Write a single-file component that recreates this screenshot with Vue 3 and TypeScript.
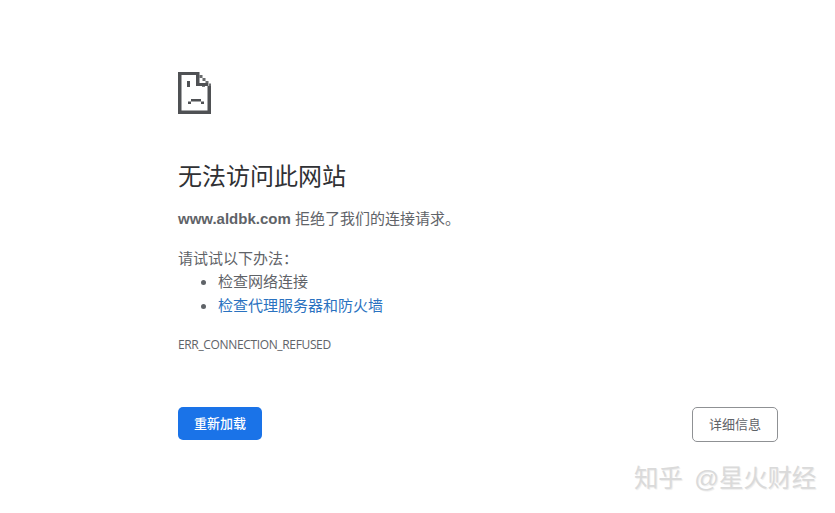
<script setup lang="ts">
const tips: { text: string; link: boolean }[] = [
  { text: '检查网络连接', link: false },
  { text: '检查代理服务器和防火墙', link: true },
]
</script>

<template>
  <div class="page">
    <main class="panel">
      <svg class="icon" width="33" height="42" viewBox="0 0 33 42" fill="#4f5154">
        <path d="M0 0H21.5V3H3.5V38.5H29.5V14H33V42H0Z" />
        <path d="M18 3H21.5V11H30V14H18Z" />
        <path d="M21.5 3H24.5V6H21.5ZM24.5 6H27.5V9H24.5ZM27.5 9H30.5V11.5H27.5ZM30.5 11.5H33V14H30.5Z" opacity=".85" />
        <path d="M9 9H12V15H9Z" />
        <path d="M24 11H27V15H24Z" opacity=".75" />
        <path d="M13 27H23V29.5H13ZM10 29.5H13V32H10ZM23 29.5H26V32H23Z" />
      </svg>
      <h1 class="title">无法访问此网站</h1>
      <p class="summary"><strong>www.aldbk.com</strong> 拒绝了我们的连接请求。</p>
      <p class="try">请试试以下办法：</p>
      <ul class="tips">
        <li v-for="tip in tips" :key="tip.text" class="tip">
          <span class="bullet"></span>
          <a v-if="tip.link" class="link" href="#">{{ tip.text }}</a>
          <span v-else>{{ tip.text }}</span>
        </li>
      </ul>
      <div class="code">ERR_CONNECTION_REFUSED</div>
      <div class="actions">
        <button class="btn primary" type="button">重新加载</button>
        <button class="btn secondary" type="button">详细信息</button>
      </div>
    </main>
    <div class="watermark">知乎 @星火财经</div>
  </div>
</template>

<style scoped>
.page {
  position: relative;
  width: 835px;
  height: 513px;
  box-sizing: border-box;
  overflow: hidden;
  padding: 72px 0 0 178px;
  background: #fff;
  color: #5f6368;
  font-family: "Liberation Sans", "Noto Sans CJK SC", sans-serif;
  font-size: 15px;
}
.panel {
  width: 600px;
}
.icon {
  display: block;
}
.title {
  margin: 45px 0 0;
  font-size: 24px;
  font-weight: 400;
  line-height: 36px;
  color: #303134;
}
.summary {
  margin: 12px 0 0;
  line-height: 24px;
}
.try {
  margin: 16px 0 0;
  line-height: 23px;
}
.tips {
  margin: 0;
  padding: 0 0 0 23px;
  list-style: none;
}
.tip {
  display: flex;
  align-items: center;
  gap: 12px;
  height: 24px;
  line-height: 24px;
}
.bullet {
  width: 5px;
  height: 5px;
  border-radius: 50%;
  background: #5f6368;
}
.link {
  color: #2a72c0;
  text-decoration: none;
}
.code {
  margin-top: 18px;
  font-size: 12px;
  line-height: 18px;
  font-family: "Open Sans", "Liberation Sans", sans-serif;
  letter-spacing: -0.35px;
}
.actions {
  display: flex;
  justify-content: space-between;
  margin-top: 53px;
}
.btn {
  width: 84px;
  height: 33px;
  padding: 0;
  border-radius: 5px;
  font-family: inherit;
  font-size: 13px;
  line-height: 1;
}
.primary {
  border: 0;
  background: #1a73e8;
  color: #fff;
  font-weight: 500;
}
.secondary {
  width: 86px;
  height: 35px;
  border: 1px solid #8f9194;
  background: #fff;
  color: #5f6368;
}
.watermark {
  position: absolute;
  left: 634px;
  top: 462px;
  font-size: 24.5px;
  word-spacing: 5px;
  letter-spacing: -0.2px;
  line-height: 34px;
  white-space: nowrap;
  color: #dadada;
  text-shadow: 1px 1px 1px #ececec;
}
</style>
